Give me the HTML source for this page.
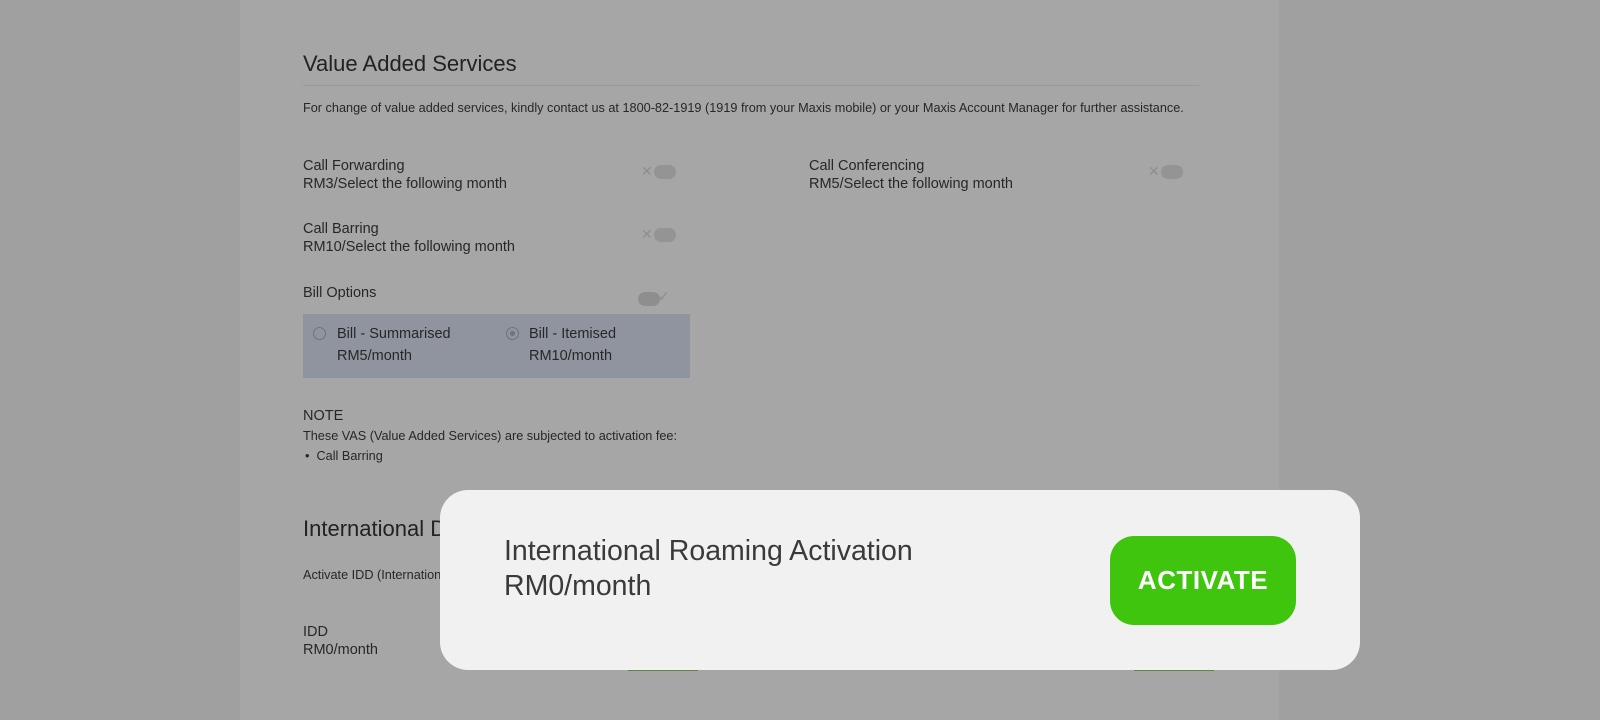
<!DOCTYPE html>
<html><head><meta charset="utf-8"><style>
*{margin:0;padding:0;box-sizing:border-box}
body{width:1600px;height:720px;background:#a0a0a0;font-family:"Liberation Sans",sans-serif;position:relative;overflow:hidden;color:#2e2e2e}
.col{position:absolute;left:240px;top:0;width:1039px;height:720px;background:#a6a6a6}
.a{position:absolute;white-space:nowrap}
.h{font-size:22px;color:#222}
.t{font-size:14.5px;color:#272727}
.s{font-size:12.7px;color:#272727}
.tg{position:absolute;width:22px;height:14px;border-radius:7px;background:#949494}
.x{position:absolute;font-size:14px;color:#8e8e8e}
.box{position:absolute;left:303px;top:314px;width:387px;height:64px;background:#8f949f}
.r{position:absolute;width:13px;height:13px;border-radius:50%;border:1.5px solid #6f737c}
.card{position:absolute;left:440px;top:490px;width:920px;height:180px;background:#f1f1f1;border-radius:28px}
.btn{position:absolute;left:1110px;top:536px;width:186px;height:89px;background:#40c50f;border-radius:24px;color:#fff;font-weight:bold;font-size:26px;text-align:center;line-height:89px;letter-spacing:0.5px}
</style></head><body>
<div class="col"></div>
<div class="a h" style="left:303px;top:51px">Value Added Services</div>
<div class="a" style="left:303px;top:85px;width:896px;height:1px;background:#999"></div>
<div class="a s" style="left:303px;top:101px">For change of value added services, kindly contact us at 1800-82-1919 (1919 from your Maxis mobile) or your Maxis Account Manager for further assistance.</div>

<div class="a t" style="left:303px;top:158px">Call Forwarding</div>
<div class="a t" style="left:303px;top:176px">RM3/Select the following month</div>
<div class="x" style="left:641px;top:163px">✕</div><div class="tg" style="left:654px;top:165px"></div>

<div class="a t" style="left:809px;top:158px">Call Conferencing</div>
<div class="a t" style="left:809px;top:176px">RM5/Select the following month</div>
<div class="x" style="left:1148px;top:163px">✕</div><div class="tg" style="left:1161px;top:165px"></div>

<div class="a t" style="left:303px;top:221px">Call Barring</div>
<div class="a t" style="left:303px;top:239px">RM10/Select the following month</div>
<div class="x" style="left:641px;top:226px">✕</div><div class="tg" style="left:654px;top:228px"></div>

<div class="a t" style="left:303px;top:285px">Bill Options</div>
<div class="tg" style="left:638px;top:292px;background:#8e8e8e"></div><div class="x" style="left:658px;top:288px">✓</div>

<div class="box"></div>
<div class="r" style="left:313px;top:327px"></div>
<div class="a t" style="left:337px;top:326px">Bill - Summarised</div>
<div class="a t" style="left:337px;top:348px">RM5/month</div>
<div class="r" style="left:506px;top:327px"></div><div class="a" style="left:510px;top:331px;width:5px;height:5px;border-radius:50%;background:#6f737c"></div>
<div class="a t" style="left:529px;top:326px">Bill - Itemised</div>
<div class="a t" style="left:529px;top:348px">RM10/month</div>

<div class="a t" style="left:303px;top:408px">NOTE</div>
<div class="a s" style="left:303px;top:429px">These VAS (Value Added Services) are subjected to activation fee:</div>
<div class="a s" style="left:305px;top:449px">•&nbsp;&nbsp;Call Barring</div>

<div class="a h" style="left:303px;top:516px">International D</div>
<div class="a s" style="left:303px;top:568px">Activate IDD (Internation</div>
<div class="a t" style="left:303px;top:624px">IDD</div>
<div class="a t" style="left:303px;top:642px">RM0/month</div>
<div class="a" style="left:628px;top:668px;width:70px;height:3px;background:#5a8a3a"></div>
<div class="a" style="left:1134px;top:668px;width:80px;height:3px;background:#5a8a3a"></div>

<div class="card"></div>
<div class="a" style="left:504px;top:535px;font-size:28.5px;color:#3a3a3a">International Roaming Activation</div>
<div class="a" style="left:504px;top:570px;font-size:28.5px;color:#3a3a3a">RM0/month</div>
<div class="btn">ACTIVATE</div>
</body></html>
